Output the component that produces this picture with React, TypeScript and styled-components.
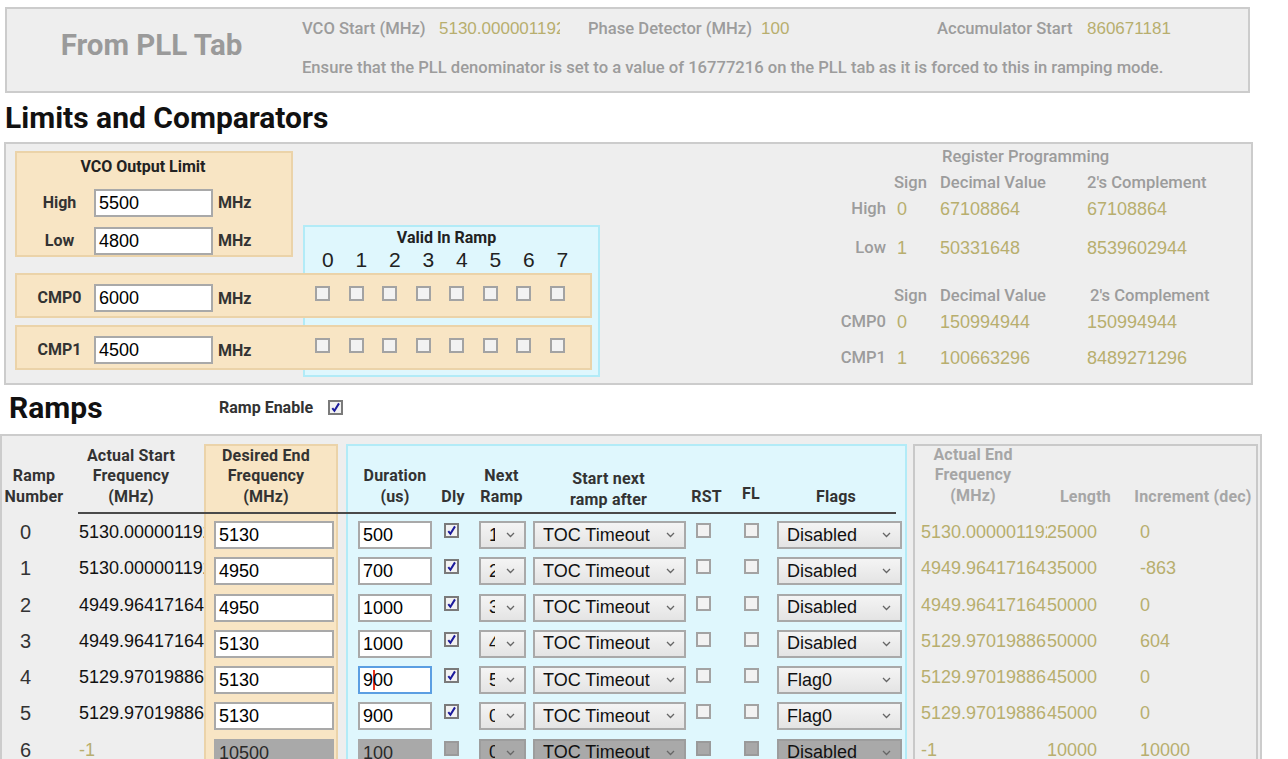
import React from 'react';
import styled, { createGlobalStyle, css } from 'styled-components';

const peach = '#f8e5c4';
const peachEdge = '#ebd3a9';
const cyan = '#dff7fd';
const cyanEdge = '#b2ebf7';
const panelBg = '#eeeeee';
const panelEdge = '#cccccc';
const olive = '#b8ae6e';
const mute = '#9c9c9c';
const valueFont = `"Liberation Sans", Arial, sans-serif`;

const GlobalStyle = createGlobalStyle`
    html, body {
        margin: 0;
        padding: 0;
        background: #fff;
    }
    body {
        font-family: Roboto, "Liberation Sans", sans-serif;
        color: #222;
    }
    #root {
        height: 100vh;
        overflow: hidden;
    }
`;

type Place = { $row?: number; $col?: number | string; $ml?: number; $mt?: number };

const place = css<Place>`
    ${(p) =>
        p.$row !== undefined &&
        css`
            grid-row: ${p.$row};
            grid-column: ${p.$col};
            justify-self: start;
            align-self: start;
            margin-left: ${p.$ml ?? 0}px;
            margin-top: ${p.$mt ?? 0}px;
        `}
`;

/* ---------- PLL panel ---------- */

const PllPanel = styled.section`
    box-sizing: border-box;
    display: flex;
    width: 1245px;
    height: 86px;
    margin: 7px 0 0 5px;
    background: ${panelBg};
    border: 2px solid ${panelEdge};
`;

const PllTitle = styled.div`
    box-sizing: border-box;
    width: 295px;
    padding: 0 6px 10px 0;
    align-self: center;
    text-align: center;
    font-size: 29.5px;
    font-weight: 700;
    color: #9a9a9a;
`;

const PllInfo = styled.div`
    display: flex;
    flex-direction: column;
    gap: 19px;
    padding-top: 10px;
`;

const PllRow = styled.div`
    display: grid;
    grid-template-columns: 137px 149px 173px 176px 150px auto;
    align-items: center;
    height: 20px;
`;

const Muted = styled.span`
    font-size: 16.6px;
    font-weight: 500;
    color: ${mute};
    white-space: nowrap;
    line-height: 20px;
`;

const Olive = styled.span<{ $clip?: number }>`
    font-family: ${valueFont};
    font-size: 17px;
    color: ${olive};
    white-space: nowrap;
    overflow: hidden;
    ${(p) => p.$clip && `max-width: ${p.$clip}px;`}
`;

/* ---------- section titles ---------- */

const SectionTitle = styled.h2<{ $indent: number; $w?: number }>`
    box-sizing: border-box;
    margin: 0;
    height: 49px;
    line-height: 49px;
    padding-left: ${(p) => p.$indent}px;
    ${(p) => p.$w && `width: ${p.$w}px; flex: none;`}
    font-size: 30px;
    font-weight: 700;
    color: #111;
`;

/* ---------- limits ---------- */

const LimitsPanel = styled.section`
    box-sizing: border-box;
    display: flex;
    align-items: flex-start;
    width: 1249px;
    height: 243px;
    margin-left: 4px;
    background: ${panelBg};
    border: 2px solid ${panelEdge};
`;

const LimitGrid = styled.div`
    display: grid;
    grid-template-columns: 278px 10px 289px 8px;
    grid-template-rows: 74px 32px 16px 45px 7px 45px 7px;
    margin: 7px 0 0 9px;
`;

const VcoBox = styled.div`
    grid-area: 1 / 1 / 3 / 2;
    box-sizing: border-box;
    padding-top: 5px;
    background: ${peach};
    border: 2px solid ${peachEdge};
`;

const BoxTitle = styled.div<{ $shift?: number }>`
    font-size: 16px;
    font-weight: 700;
    line-height: 18px;
    color: #222;
    text-align: center;
    padding-right: ${(p) => p.$shift ?? 0}px;
`;

const LimitRows = styled.div`
    display: grid;
    grid-template-columns: 77px 119px auto;
    row-gap: 8px;
    align-items: center;
    margin-top: 12px;
`;

const RowLabel = styled.div`
    box-sizing: border-box;
    padding-left: 8px;
    text-align: center;
    font-size: 16px;
    font-weight: 700;
    color: #333;
    line-height: 28px;
`;

const Unit = styled.div`
    padding-left: 5px;
    font-size: 16px;
    font-weight: 700;
    color: #333;
    line-height: 30px;
`;

const ValidBox = styled.div`
    grid-area: 2 / 3 / 8 / 5;
    box-sizing: border-box;
    padding-top: 2px;
    background: ${cyan};
    border: 2px solid ${cyanEdge};
`;

const DigitRow = styled.div`
    display: grid;
    grid-template-columns: repeat(8, 33.5px);
    padding-left: 6px;
    margin-top: 2px;
`;

const Digit = styled.span`
    text-align: center;
    font-family: ${valueFont};
    font-size: 21px;
    line-height: 22px;
    color: #222;
`;

const CmpRow = styled.div<{ $row: number }>`
    grid-row: ${(p) => p.$row};
    grid-column: 1 / 4;
    display: grid;
    grid-template-columns: 77px 119px 93px repeat(8, 33.5px);
    align-items: start;
    box-sizing: border-box;
    padding-top: 9px;
    background: ${peach};
    border: 2px solid ${peachEdge};
`;

const CheckCell = styled.div`
    display: flex;
    justify-content: center;
    padding-top: 2px;
`;

const RegGrid = styled.div`
    display: grid;
    grid-template-columns: 62px 52px 147px auto;
    grid-template-rows: 26px 26px 39px 48px 26px 36px 22px;
    margin: 2px 0 0 226px;
    line-height: 22px;
`;

const RegTitle = styled(Muted)`
    grid-column: 3 / 5;
    padding-left: 2px;
    line-height: 22px;
`;

const RegLabel = styled(Muted)<{ $align?: 'right' | 'left'; $pad?: number }>`
    text-align: ${(p) => p.$align ?? 'left'};
    padding: 0 ${(p) => (p.$align === 'right' ? 2 : 0)}px 0 ${(p) => p.$pad ?? 0}px;
    line-height: 22px;
`;

const RegValue = styled(Olive)<{ $pad?: number }>`
    font-size: 18px;
    line-height: 22px;
    padding-left: ${(p) => p.$pad ?? 0}px;
`;

/* ---------- ramps ---------- */

const RampsHead = styled.div`
    box-sizing: border-box;
    display: flex;
    align-items: center;
    height: 49px;
    padding-bottom: 5px;
`;

const EnableLabel = styled.span`
    font-size: 16px;
    font-weight: 700;
    color: #333;
    margin-right: 15px;
`;

const RampsPanel = styled.section`
    box-sizing: border-box;
    width: 1262px;
    padding-top: 8px;
    background: ${panelBg};
    border: 2px solid ${panelEdge};
`;

const RampGrid = styled.div`
    display: grid;
    grid-template-columns: 74px 128px 134px 8px 86px 42px 55px 159px 37px 52px 130px 6px 134px 83px 128px;
    grid-template-rows: 70px repeat(7, 36.3px);
`;

const bands = {
    peach: [peach, peachEdge],
    cyan: [cyan, cyanEdge],
    grey: [panelBg, '#c9c9c9'],
};

const Band = styled.div<{ $col: string; $tone: keyof typeof bands }>`
    grid-row: 1 / 9;
    grid-column: ${(p) => p.$col};
    background: ${(p) => bands[p.$tone][0]};
    border: 2px solid ${(p) => bands[p.$tone][1]};
`;

const HeadRule = styled.div`
    grid-row: 1;
    grid-column: 2 / 12;
    align-self: end;
    height: 2px;
    margin: 0 11px 0 2px;
    background: #4a4a4a;
`;

const HeadCell = styled.div<{ $col: number; $pl?: number; $pr?: number; $pb?: number; $mute?: boolean }>`
    grid-row: 1;
    grid-column: ${(p) => p.$col};
    align-self: end;
    text-align: center;
    padding: 0 ${(p) => p.$pr ?? 0}px ${(p) => p.$pb ?? 7}px ${(p) => p.$pl ?? 0}px;
    font-size: 16px;
    font-weight: 700;
    line-height: 20.5px;
    letter-spacing: 0.2px;
    color: ${(p) => (p.$mute ? '#a6a6a6' : '#333')};
    white-space: nowrap;
`;

const ValueCell = styled.div<{ $row: number; $col: number; $pl?: number; $olive?: boolean; $big?: boolean }>`
    grid-row: ${(p) => p.$row};
    grid-column: ${(p) => p.$col};
    align-self: start;
    margin-top: 4px;
    padding-left: ${(p) => p.$pl ?? 0}px;
    overflow: hidden;
    white-space: nowrap;
    font-family: ${valueFont};
    font-size: ${(p) => (p.$big ? 20 : 18)}px;
    line-height: 28px;
    color: ${(p) => (p.$olive ? olive : p.$big ? '#333' : '#111')};
`;

const Field = styled.div<Place & { $w: number; $tone?: 'focus' | 'off' }>`
    ${place}
    box-sizing: border-box;
    width: ${(p) => p.$w}px;
    height: 28px;
    padding-left: 3px;
    border: 2px solid ${(p) => (p.$tone === 'focus' ? '#5b9ee2' : '#a9a9a9')};
    background: ${(p) => (p.$tone === 'off' ? '#a9a9a9' : '#fff')};
    font-family: ${valueFont};
    font-size: 18px;
    line-height: 24px;
    color: ${(p) => (p.$tone === 'off' ? '#2a2a2a' : '#000')};
    white-space: nowrap;
    overflow: hidden;
`;

const Caret = styled.span`
    display: inline-block;
    width: 1.5px;
    height: 20px;
    margin-right: -1.5px;
    vertical-align: -4px;
    background: #e5321f;
`;

const Drop = styled.div<Place & { $w: number; $off?: boolean }>`
    ${place}
    box-sizing: border-box;
    display: flex;
    align-items: center;
    width: ${(p) => p.$w}px;
    height: 28px;
    padding: 0 9px 0 8px;
    border: 2px solid ${(p) => (p.$off ? '#9d9d9d' : '#a9a9a9')};
    background: ${(p) => (p.$off ? '#a9a9a9' : 'linear-gradient(#f4f4f4, #e4e4e4)')};
    font-family: ${valueFont};
    font-size: 18px;
    color: #111;
`;

const DropText = styled.span<{ $clip?: number }>`
    overflow: hidden;
    white-space: nowrap;
    ${(p) => p.$clip && `width: ${p.$clip}px; flex: none;`}
`;

const ChevronMark = styled.svg`
    flex: none;
    margin-left: auto;
`;

const Chevron = () => (
    <ChevronMark width="9" height="6" viewBox="0 0 9 6">
        <path d="M1 1l3.5 3.5L8 1" fill="none" stroke="#666" strokeWidth="1.3" />
    </ChevronMark>
);

const Box = styled.span<Place & { $on?: boolean; $off?: boolean }>`
    ${place}
    box-sizing: border-box;
    display: inline-flex;
    align-items: center;
    justify-content: center;
    width: 15px;
    height: 15px;
    background: ${(p) => (p.$off ? '#a8a8a8' : '#f2f2f2')};
    border: 2px solid ${(p) => (p.$off ? '#9a9a9a' : p.$on ? '#7a7a7a' : '#a3a3a3')};
`;

interface CheckProps extends Place {
    on?: boolean;
    off?: boolean;
}

const Check = ({ on, off, ...rest }: CheckProps) => (
    <Box $on={on} $off={off} {...rest}>
        {on && (
            <svg width="11" height="11" viewBox="0 0 11 11">
                <path d="M2.3 6.2L4.4 8.8L9 1.4" fill="none" stroke="#1b1b9c" strokeWidth="2" />
            </svg>
        )}
    </Box>
);

interface Ramp {
    n: number;
    start: string;
    end: string;
    dur: string;
    next: string;
    flags: string;
    aEnd: string;
    len: string;
    inc: string;
    focus?: boolean;
    off?: boolean;
}

const ramps: Ramp[] = [
    { n: 0, start: '5130.000001192', end: '5130', dur: '500', next: '1', flags: 'Disabled', aEnd: '5130.000001192', len: '25000', inc: '0' },
    { n: 1, start: '5130.000001192', end: '4950', dur: '700', next: '2', flags: 'Disabled', aEnd: '4949.964171648', len: '35000', inc: '-863' },
    { n: 2, start: '4949.964171648', end: '4950', dur: '1000', next: '3', flags: 'Disabled', aEnd: '4949.964171648', len: '50000', inc: '0' },
    { n: 3, start: '4949.964171648', end: '5130', dur: '1000', next: '4', flags: 'Disabled', aEnd: '5129.970198869', len: '50000', inc: '604' },
    { n: 4, start: '5129.970198869', end: '5130', dur: '900', next: '5', flags: 'Flag0', aEnd: '5129.970198869', len: '45000', inc: '0', focus: true },
    { n: 5, start: '5129.970198869', end: '5130', dur: '900', next: '0', flags: 'Flag0', aEnd: '5129.970198869', len: '45000', inc: '0' },
    { n: 6, start: '-1', end: '10500', dur: '100', next: '0', flags: 'Disabled', aEnd: '-1', len: '10000', inc: '10000', off: true },
];

const bits = [0, 1, 2, 3, 4, 5, 6, 7];

const App = () => {
    const durTone = (r: Ramp) => (r.off ? 'off' : r.focus ? 'focus' : undefined);
    return (
        <>
            <GlobalStyle />
            <PllPanel>
                <PllTitle>From PLL Tab</PllTitle>
                <PllInfo>
                    <PllRow>
                        <Muted>VCO Start (MHz)</Muted>
                        <Olive $clip={121}>5130.000001192</Olive>
                        <Muted>Phase Detector (MHz)</Muted>
                        <Olive>100</Olive>
                        <Muted>Accumulator Start</Muted>
                        <Olive>860671181</Olive>
                    </PllRow>
                    <Muted>
                        Ensure that the PLL denominator is set to a value of 16777216 on the PLL tab as it is forced
                        to this in ramping mode.
                    </Muted>
                </PllInfo>
            </PllPanel>

            <SectionTitle $indent={5}>Limits and Comparators</SectionTitle>
            <LimitsPanel>
                <LimitGrid>
                    <VcoBox>
                        <BoxTitle $shift={22}>VCO Output Limit</BoxTitle>
                        <LimitRows>
                            <RowLabel>High</RowLabel>
                            <Field $w={119}>5500</Field>
                            <Unit>MHz</Unit>
                            <RowLabel>Low</RowLabel>
                            <Field $w={119}>4800</Field>
                            <Unit>MHz</Unit>
                        </LimitRows>
                    </VcoBox>
                    <ValidBox>
                        <BoxTitle $shift={10}>Valid In Ramp</BoxTitle>
                        <DigitRow>
                            {bits.map((b) => (
                                <Digit key={b}>{b}</Digit>
                            ))}
                        </DigitRow>
                    </ValidBox>
                    {[
                        { name: 'CMP0', value: '6000', row: 4 },
                        { name: 'CMP1', value: '4500', row: 6 },
                    ].map((c) => (
                        <CmpRow key={c.name} $row={c.row}>
                            <RowLabel>{c.name}</RowLabel>
                            <Field $w={119}>{c.value}</Field>
                            <Unit>MHz</Unit>
                            {bits.map((b) => (
                                <CheckCell key={b}>
                                    <Check />
                                </CheckCell>
                            ))}
                        </CmpRow>
                    ))}
                </LimitGrid>

                <RegGrid>
                    <span />
                    <span />
                    <RegTitle>Register Programming</RegTitle>

                    <span />
                    <RegLabel $pad={6}>Sign</RegLabel>
                    <RegLabel>Decimal Value</RegLabel>
                    <RegLabel>2's Complement</RegLabel>

                    <RegLabel $align="right">High</RegLabel>
                    <RegValue $pad={9}>0</RegValue>
                    <RegValue>67108864</RegValue>
                    <RegValue>67108864</RegValue>

                    <RegLabel $align="right">Low</RegLabel>
                    <RegValue $pad={9}>1</RegValue>
                    <RegValue>50331648</RegValue>
                    <RegValue>8539602944</RegValue>

                    <span />
                    <RegLabel $pad={6}>Sign</RegLabel>
                    <RegLabel>Decimal Value</RegLabel>
                    <RegLabel $pad={3}>2's Complement</RegLabel>

                    <RegLabel $align="right">CMP0</RegLabel>
                    <RegValue $pad={9}>0</RegValue>
                    <RegValue>150994944</RegValue>
                    <RegValue>150994944</RegValue>

                    <RegLabel $align="right">CMP1</RegLabel>
                    <RegValue $pad={9}>1</RegValue>
                    <RegValue>100663296</RegValue>
                    <RegValue>8489271296</RegValue>
                </RegGrid>
            </LimitsPanel>

            <RampsHead>
                <SectionTitle $indent={9} $w={219}>
                    Ramps
                </SectionTitle>
                <EnableLabel>Ramp Enable</EnableLabel>
                <Check on />
            </RampsHead>

            <RampsPanel>
                <RampGrid>
                    <Band $col="3 / 4" $tone="peach" />
                    <Band $col="5 / 12" $tone="cyan" />
                    <Band $col="13 / 16" $tone="grey" />

                    <HeadCell $col={1} $pr={10}>
                        Ramp
                        <br />
                        Number
                    </HeadCell>
                    <HeadCell $col={2} $pr={18}>
                        Actual Start
                        <br />
                        Frequency
                        <br />
                        (MHz)
                    </HeadCell>
                    <HeadCell $col={3} $pr={10}>
                        Desired End
                        <br />
                        Frequency
                        <br />
                        (MHz)
                    </HeadCell>
                    <HeadCell $col={5} $pl={12}>
                        Duration
                        <br />
                        (us)
                    </HeadCell>
                    <HeadCell $col={6}>Dly</HeadCell>
                    <HeadCell $col={7}>
                        Next
                        <br />
                        Ramp
                    </HeadCell>
                    <HeadCell $col={8} $pb={4}>
                        Start next
                        <br />
                        ramp after
                    </HeadCell>
                    <HeadCell $col={9}>RST</HeadCell>
                    <HeadCell $col={10} $pb={10}>
                        FL
                    </HeadCell>
                    <HeadCell $col={11} $pr={12}>
                        Flags
                    </HeadCell>
                    <HeadCell $col={13} $pr={14} $pb={8} $mute>
                        Actual End
                        <br />
                        Frequency
                        <br />
                        (MHz)
                    </HeadCell>
                    <HeadCell $col={14} $pr={6} $mute>
                        Length
                    </HeadCell>
                    <HeadCell $col={15} $pr={2} $mute>
                        Increment (dec)
                    </HeadCell>
                    <HeadRule />

                    {ramps.map((r, i) => {
                        const row = i + 2;
                        return (
                            <React.Fragment key={r.n}>
                                <ValueCell $row={row} $col={1} $pl={18} $big>
                                    {r.n}
                                </ValueCell>
                                <ValueCell $row={row} $col={2} $pl={3} $olive={r.off}>
                                    {r.start}
                                </ValueCell>
                                <Field $row={row} $col={3} $ml={10} $mt={7} $w={120} $tone={r.off ? 'off' : undefined}>
                                    {r.end}
                                </Field>
                                <Field $row={row} $col={5} $ml={12} $mt={7} $w={74} $tone={durTone(r)}>
                                    {r.focus ? (
                                        <>
                                            9<Caret />
                                            00
                                        </>
                                    ) : (
                                        r.dur
                                    )}
                                </Field>
                                <Check $row={row} $col={6} $ml={12} $mt={9} on={!r.off} off={r.off} />
                                <Drop $row={row} $col={7} $ml={5} $mt={7} $w={47} $off={r.off}>
                                    <DropText $clip={6}>{r.next}</DropText>
                                    <Chevron />
                                </Drop>
                                <Drop $row={row} $col={8} $ml={4} $mt={7} $w={153} $off={r.off}>
                                    <DropText>TOC Timeout</DropText>
                                    <Chevron />
                                </Drop>
                                <Check $row={row} $col={9} $ml={8} $mt={9} off={r.off} />
                                <Check $row={row} $col={10} $ml={19} $mt={9} off={r.off} />
                                <Drop $row={row} $col={11} $mt={7} $w={125} $off={r.off}>
                                    <DropText>{r.flags}</DropText>
                                    <Chevron />
                                </Drop>
                                <ValueCell $row={row} $col={13} $pl={8} $olive>
                                    {r.aEnd}
                                </ValueCell>
                                <ValueCell $row={row} $col={14} $olive>
                                    {r.len}
                                </ValueCell>
                                <ValueCell $row={row} $col={15} $pl={10} $olive>
                                    {r.inc}
                                </ValueCell>
                            </React.Fragment>
                        );
                    })}
                </RampGrid>
            </RampsPanel>
        </>
    );
};

export default App;
